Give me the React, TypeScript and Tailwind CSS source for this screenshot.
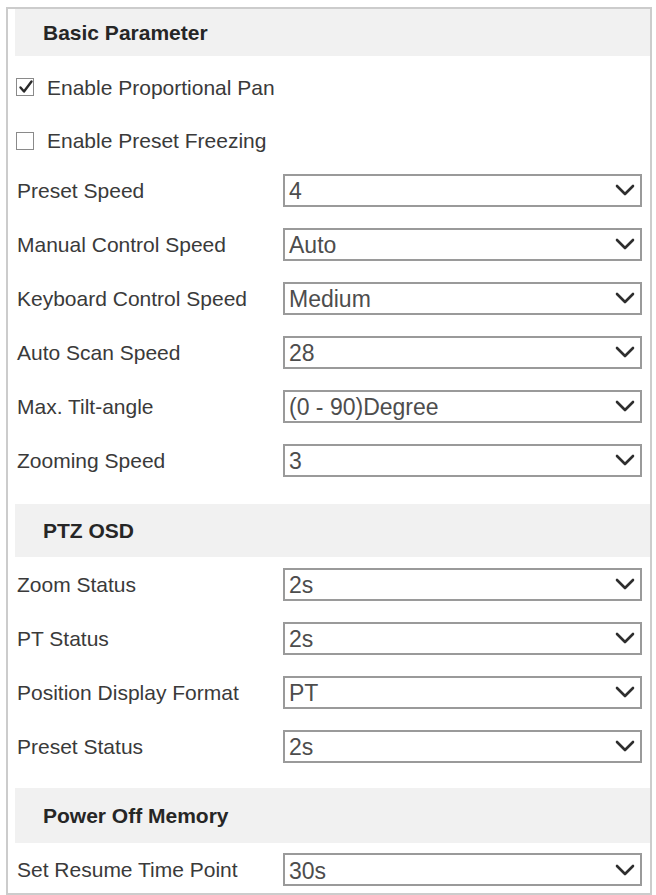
import React from 'react';

type Row = { label: string; value: string };

const basicRows: Row[] = [
  { label: 'Preset Speed', value: '4' },
  { label: 'Manual Control Speed', value: 'Auto' },
  { label: 'Keyboard Control Speed', value: 'Medium' },
  { label: 'Auto Scan Speed', value: '28' },
  { label: 'Max. Tilt-angle', value: '(0 - 90)Degree' },
  { label: 'Zooming Speed', value: '3' },
];

const osdRows: Row[] = [
  { label: 'Zoom Status', value: '2s' },
  { label: 'PT Status', value: '2s' },
  { label: 'Position Display Format', value: 'PT' },
  { label: 'Preset Status', value: '2s' },
];

function Chevron() {
  return (
    <svg width="20" height="12" viewBox="0 0 20 12" fill="none" className="shrink-0">
      <path d="M2 2l8 8 8-8" stroke="#2e2e2e" strokeWidth="2.6" strokeLinecap="round" strokeLinejoin="round" />
    </svg>
  );
}

function SelectBox({ value }: { value: string }) {
  return (
    <div className="w-[359px] h-[33px] border-2 border-[#9a9a9a] bg-white flex items-center justify-between pl-[4px] pr-[5px]">
      <span className="text-[23px] leading-none text-[#4d4d4d] pt-[3px]">{value}</span>
      <Chevron />
    </div>
  );
}

function FieldRow({ label, value, className = 'h-[54px]' }: Row & { className?: string }) {
  return (
    <div className={`flex items-center ${className}`}>
      <div className="w-[275px] pl-[9px] text-[21px] leading-none text-[#3a3a3a]">{label}</div>
      <SelectBox value={value} />
    </div>
  );
}

function SectionHeader({ title, className }: { title: string; className: string }) {
  return (
    <div className={`ml-[7px] bg-[#f1f1f1] flex items-center pl-[28px] ${className}`}>
      <span className="text-[21px] font-bold leading-none text-[#262626]">{title}</span>
    </div>
  );
}

function CheckRow({ label, checked, className }: { label: string; checked: boolean; className: string }) {
  return (
    <div className={`flex items-center pl-[8px] ${className}`}>
      <div className="relative w-[18px] h-[18px] border-[1.5px] border-[#8a8a8a] bg-white">
        {checked && (
          <svg width="16" height="16" viewBox="0 0 16 16" fill="none" className="absolute left-[1px] top-[0px]">
            <path d="M2.5 8.5l3.5 4L13.5 2.5" stroke="#2a2a2a" strokeWidth="2.4" strokeLinecap="round" strokeLinejoin="round" />
          </svg>
        )}
      </div>
      <span className="ml-[13px] text-[21px] leading-none text-[#3a3a3a]">{label}</span>
    </div>
  );
}

export default function App() {
  return (
    <div className="w-[656px] h-[895px] bg-white pt-[7px] pl-[6px]" style={{ fontFamily: '"Liberation Sans", Arial, sans-serif' }}>
      <div className="w-[646px] border-2 border-[#cccccc] bg-white">
        <SectionHeader title="Basic Parameter" className="h-[47px]" />
        <CheckRow label="Enable Proportional Pan" checked className="h-[62px]" />
        <CheckRow label="Enable Preset Freezing" checked={false} className="h-[45px]" />
        {basicRows.map(r => (
          <FieldRow key={r.label} {...r} />
        ))}

        <SectionHeader title="PTZ OSD" className="mt-[17px] h-[53px]" />
        {osdRows.map(r => (
          <FieldRow key={r.label} {...r} />
        ))}

        <SectionHeader title="Power Off Memory" className="mt-[15px] h-[55px]" />
        <FieldRow label="Set Resume Time Point" value="30s" className="pt-[10px] pb-[7px]" />
      </div>
    </div>
  );
}
